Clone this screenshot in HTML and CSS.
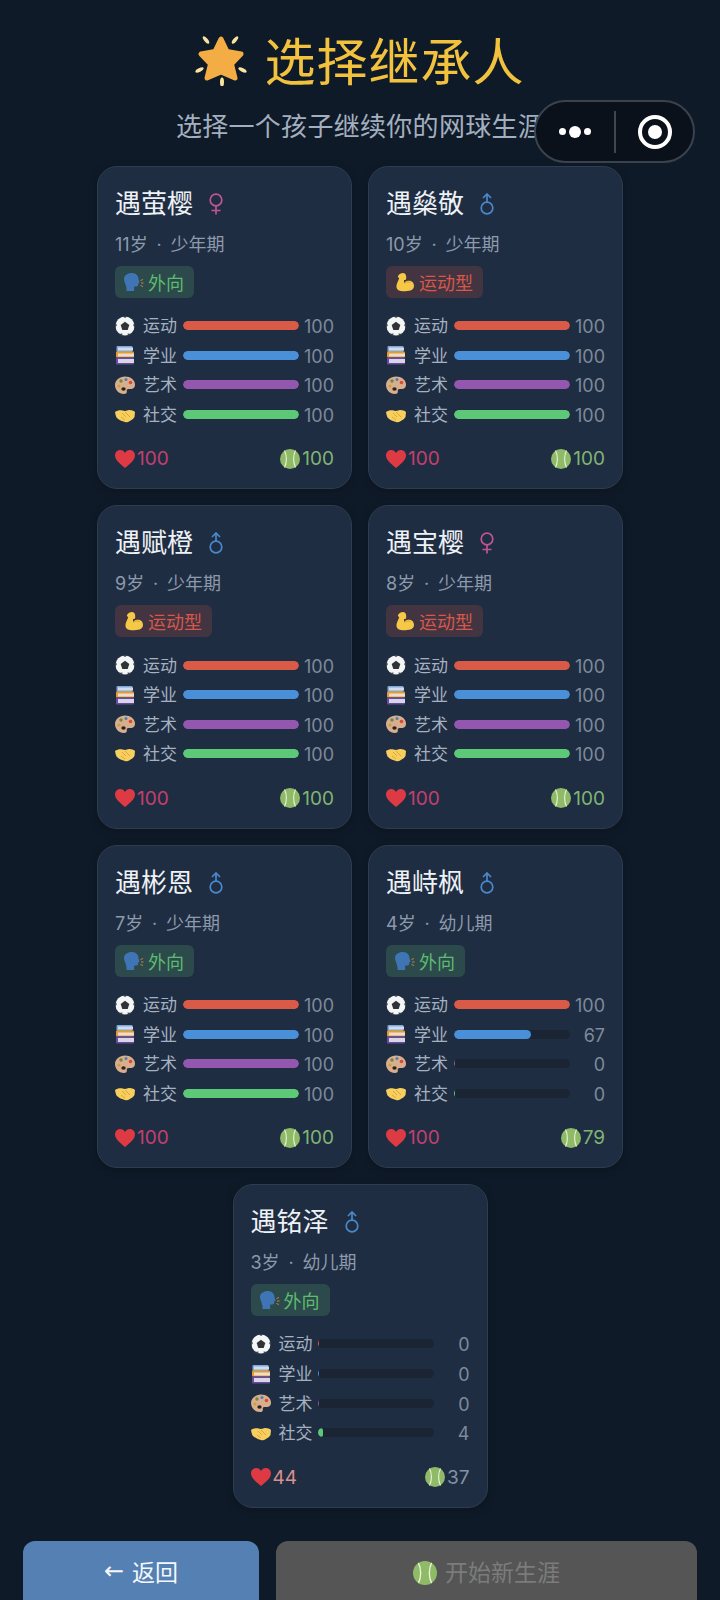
FILE: index.html
```html
<!DOCTYPE html>
<html lang="zh-CN">
<head>
    <meta charset="UTF-8">
    <meta name="viewport" content="width=device-width, initial-scale=1.0">
    <title>选择继承人</title>
    <link rel="stylesheet" href="styles.css">
</head>
<body>
    <svg class="defs">
        <symbol id="i-star" viewBox="0 0 52 52">
            <path d="M26 5l6 12.500 14 2.500-9.500 10 3.500 14-14-6-14 6 3.500-14L6 20l14-2.500z" fill="#f4ac45" stroke="#f4ac45" stroke-width="5" stroke-linejoin="round"/>
            <g fill="#fbe3a0">
                <ellipse cx="27" cy="48" rx="2" ry="4.500"/>
                <ellipse cx="11" cy="6" rx="1.800" ry="4.500" transform="rotate(-40 11 6)"/>
                <ellipse cx="40" cy="6" rx="1.800" ry="4.500" transform="rotate(40 40 6)"/>
                <ellipse cx="4.500" cy="36" rx="1.800" ry="4.500" transform="rotate(65 4.500 36)"/>
                <ellipse cx="47.500" cy="36" rx="1.800" ry="4.500" transform="rotate(-65 47.500 36)"/>
            </g>
        </symbol>
        <symbol id="i-girl" viewBox="0 0 16 22">
            <g stroke="currentColor" stroke-width="1.700" fill="none">
                <circle cx="8" cy="7" r="5.800"/>
                <path d="M8 12.800V21.500M3.500 17.500h9"/>
            </g>
        </symbol>
        <symbol id="i-boy" viewBox="0 0 16 22">
            <g stroke="currentColor" stroke-width="1.700" fill="none">
                <circle cx="8" cy="15" r="5.800"/>
                <path d="M8 9.200V1M4 5l4-4 4 4"/>
            </g>
        </symbol>
        <symbol id="i-head" viewBox="0 0 20 20">
            <path d="M8 1c4 0 6.500 3 6.500 6 0 1 .5 1.800 1 3 .3.800-.5 1-1.200 1.200 0 2-.3 3.300-2 3.300l-2 0c-.5 2 0 3.500 0 4.500H2.500c.3-3-.3-4.500-1-6.500C.7 10 0 8.500 0 7c0-3.500 3.500-6 8-6z" fill="#3f75b5"/>
            <path d="M16.500 8.500l2.500-1M17 11h2.500M16.500 13.500l2.500 1" stroke="#c9803f" stroke-width="1" fill="none"/>
        </symbol>
        <symbol id="i-muscle" viewBox="0 0 20 20">
            <path d="M8 1c-2 0-4 1-5 3-.4 1 .5 1.500 1.200 2.300-1 3-3.200 6-2.700 9 .5 3 3.500 4 7 4 5 0 10.500-.5 10.500-5.500 0-3.500-3-5.500-6-5-2 .3-3 1.200-4 2.300L9 8c1 .3 2 0 2.200-1.500C11.500 4 10.800 1 8 1z" fill="#f5c947"/>
            <path d="M9.500 11.500c1.500-1.500 4-2 6-1" stroke="#e0a030" stroke-width="1" fill="none"/>
        </symbol>
        <symbol id="i-ball" viewBox="0 0 20 20">
            <circle cx="10" cy="10" r="9.500" fill="#f4f5f5"/>
            <path d="M10 5.800l4.300 3.200-1.600 4.900H7.300L5.700 9z" fill="#2f3338"/>
            <path d="M7 0h6l-3 2zM20 7v5l-2-3zM0 7v5l2-3zM3.500 18l3.500 2 .5-2.500zM16.500 18L13 20l-.5-2.500z" fill="#3a4450"/>
        </symbol>
        <symbol id="i-books" viewBox="0 0 20 20">
            <rect x="1.500" y="1" width="16" height="6" rx="1" fill="#7fa8d8"/>
            <rect x="3" y="2.500" width="15" height="3" fill="#cfdcee"/>
            <rect x="1" y="6.500" width="18" height="6" rx="1" fill="#e89a30"/>
            <rect x="3" y="8.500" width="16" height="3" fill="#eadfcf"/>
            <rect x="1" y="12.500" width="18" height="7" rx="1" fill="#6a4aa0"/>
            <rect x="3" y="14" width="16" height="4" fill="#d8d6e6"/>
        </symbol>
        <symbol id="i-palette" viewBox="0 0 20 20">
            <path d="M10 1.500c5.500 0 10 3.500 10 8 0 4-3 5-5.500 4.500-2-.3-3 .5-2.700 2 .3 1.700-.5 3-3 3C4 19 0 15 0 10 0 5.500 4.500 1.500 10 1.500z" fill="#d9ae8c"/>
            <circle cx="6" cy="6" r="1.700" fill="#6b8a4a"/>
            <circle cx="11" cy="4.500" r="1.500" fill="#4a80b8"/>
            <circle cx="15.500" cy="7.500" r="1.800" fill="#d84a3a"/>
            <circle cx="4" cy="11" r="1.600" fill="#c8a040"/>
            <ellipse cx="8.500" cy="14" rx="2.200" ry="1.800" fill="#2b2224"/>
        </symbol>
        <symbol id="i-hands" viewBox="0 0 20 20">
            <path d="M0 7c2-1.500 5-2 7.500-1.500L10 6l3-.8c2.500-.5 5 .2 7 1.800l-.5 5c-1 2-3 3-5 4.300-1.500 1-3 1.200-4.500.7-3-.8-6-2-8.500-4.500C.8 11 .3 9 0 7z" fill="#f7cf5e"/>
            <path d="M7 8l4 4M10 7l5 5M6 12l4 3" stroke="#dc9a28" stroke-width=".8" fill="none"/>
        </symbol>
        <symbol id="i-heart" viewBox="0 0 20 20">
            <path d="M10 19C6 15.500 0 11.500 0 6.500 0 3.200 2.500 1 5.200 1 7.200 1 9 2 10 4c1-2 2.800-3 4.800-3C17.500 1 20 3.200 20 6.500c0 5-6 9-10 12.500z" fill="#dd3a44"/>
        </symbol>
        <symbol id="i-tennis" viewBox="0 0 20 20">
            <circle cx="10" cy="10" r="10" fill="#8fbb68"/>
            <path d="M4.500 1.600C7 6.500 7 13.500 4.500 18.400M15.500 1.600C13 6.500 13 13.500 15.500 18.400" stroke="#eef2d8" stroke-width="1.100" fill="none"/>
        </symbol>
    </svg>

    <div class="capsule">
        <div class="capsule-dots"><i></i><i class="big"></i><i></i></div>
        <div class="capsule-line"></div>
        <div class="capsule-target"><i></i></div>
    </div>

    <div class="title">
        <svg class="title-icon"><use href="#i-star"/></svg>
        <h1>选择继承人</h1>
    </div>
    <p class="subtitle">选择一个孩子继续你的网球生涯</p>

    <div class="cards">
        <div class="card">
            <div class="name">遇萤樱<svg class="gender girl"><use href="#i-girl"/></svg></div>
            <div class="age">11岁 · 少年期</div>
            <div class="tag tag-talk"><svg class="emoji"><use href="#i-head"/></svg>外向</div>
            <div class="stats">
                <div class="stat"><svg class="emoji"><use href="#i-ball"/></svg><span class="label">运动</span><div class="track"><div class="fill red" style="width:100%"></div></div><span class="val">100</span></div>
                <div class="stat"><svg class="emoji"><use href="#i-books"/></svg><span class="label">学业</span><div class="track"><div class="fill blue" style="width:100%"></div></div><span class="val">100</span></div>
                <div class="stat"><svg class="emoji"><use href="#i-palette"/></svg><span class="label">艺术</span><div class="track"><div class="fill purple" style="width:100%"></div></div><span class="val">100</span></div>
                <div class="stat"><svg class="emoji"><use href="#i-hands"/></svg><span class="label">社交</span><div class="track"><div class="fill green" style="width:100%"></div></div><span class="val">100</span></div>
            </div>
            <div class="foot">
                <div class="foot-item hp-full"><svg class="emoji"><use href="#i-heart"/></svg>100</div>
                <div class="foot-item en-full"><svg class="emoji"><use href="#i-tennis"/></svg>100</div>
            </div>
        </div>

        <div class="card">
            <div class="name">遇燊敬<svg class="gender boy"><use href="#i-boy"/></svg></div>
            <div class="age">10岁 · 少年期</div>
            <div class="tag tag-sport"><svg class="emoji"><use href="#i-muscle"/></svg>运动型</div>
            <div class="stats">
                <div class="stat"><svg class="emoji"><use href="#i-ball"/></svg><span class="label">运动</span><div class="track"><div class="fill red" style="width:100%"></div></div><span class="val">100</span></div>
                <div class="stat"><svg class="emoji"><use href="#i-books"/></svg><span class="label">学业</span><div class="track"><div class="fill blue" style="width:100%"></div></div><span class="val">100</span></div>
                <div class="stat"><svg class="emoji"><use href="#i-palette"/></svg><span class="label">艺术</span><div class="track"><div class="fill purple" style="width:100%"></div></div><span class="val">100</span></div>
                <div class="stat"><svg class="emoji"><use href="#i-hands"/></svg><span class="label">社交</span><div class="track"><div class="fill green" style="width:100%"></div></div><span class="val">100</span></div>
            </div>
            <div class="foot">
                <div class="foot-item hp-full"><svg class="emoji"><use href="#i-heart"/></svg>100</div>
                <div class="foot-item en-full"><svg class="emoji"><use href="#i-tennis"/></svg>100</div>
            </div>
        </div>

        <div class="card">
            <div class="name">遇赋橙<svg class="gender boy"><use href="#i-boy"/></svg></div>
            <div class="age">9岁 · 少年期</div>
            <div class="tag tag-sport"><svg class="emoji"><use href="#i-muscle"/></svg>运动型</div>
            <div class="stats">
                <div class="stat"><svg class="emoji"><use href="#i-ball"/></svg><span class="label">运动</span><div class="track"><div class="fill red" style="width:100%"></div></div><span class="val">100</span></div>
                <div class="stat"><svg class="emoji"><use href="#i-books"/></svg><span class="label">学业</span><div class="track"><div class="fill blue" style="width:100%"></div></div><span class="val">100</span></div>
                <div class="stat"><svg class="emoji"><use href="#i-palette"/></svg><span class="label">艺术</span><div class="track"><div class="fill purple" style="width:100%"></div></div><span class="val">100</span></div>
                <div class="stat"><svg class="emoji"><use href="#i-hands"/></svg><span class="label">社交</span><div class="track"><div class="fill green" style="width:100%"></div></div><span class="val">100</span></div>
            </div>
            <div class="foot">
                <div class="foot-item hp-full"><svg class="emoji"><use href="#i-heart"/></svg>100</div>
                <div class="foot-item en-full"><svg class="emoji"><use href="#i-tennis"/></svg>100</div>
            </div>
        </div>

        <div class="card">
            <div class="name">遇宝樱<svg class="gender girl"><use href="#i-girl"/></svg></div>
            <div class="age">8岁 · 少年期</div>
            <div class="tag tag-sport"><svg class="emoji"><use href="#i-muscle"/></svg>运动型</div>
            <div class="stats">
                <div class="stat"><svg class="emoji"><use href="#i-ball"/></svg><span class="label">运动</span><div class="track"><div class="fill red" style="width:100%"></div></div><span class="val">100</span></div>
                <div class="stat"><svg class="emoji"><use href="#i-books"/></svg><span class="label">学业</span><div class="track"><div class="fill blue" style="width:100%"></div></div><span class="val">100</span></div>
                <div class="stat"><svg class="emoji"><use href="#i-palette"/></svg><span class="label">艺术</span><div class="track"><div class="fill purple" style="width:100%"></div></div><span class="val">100</span></div>
                <div class="stat"><svg class="emoji"><use href="#i-hands"/></svg><span class="label">社交</span><div class="track"><div class="fill green" style="width:100%"></div></div><span class="val">100</span></div>
            </div>
            <div class="foot">
                <div class="foot-item hp-full"><svg class="emoji"><use href="#i-heart"/></svg>100</div>
                <div class="foot-item en-full"><svg class="emoji"><use href="#i-tennis"/></svg>100</div>
            </div>
        </div>

        <div class="card">
            <div class="name">遇彬恩<svg class="gender boy"><use href="#i-boy"/></svg></div>
            <div class="age">7岁 · 少年期</div>
            <div class="tag tag-talk"><svg class="emoji"><use href="#i-head"/></svg>外向</div>
            <div class="stats">
                <div class="stat"><svg class="emoji"><use href="#i-ball"/></svg><span class="label">运动</span><div class="track"><div class="fill red" style="width:100%"></div></div><span class="val">100</span></div>
                <div class="stat"><svg class="emoji"><use href="#i-books"/></svg><span class="label">学业</span><div class="track"><div class="fill blue" style="width:100%"></div></div><span class="val">100</span></div>
                <div class="stat"><svg class="emoji"><use href="#i-palette"/></svg><span class="label">艺术</span><div class="track"><div class="fill purple" style="width:100%"></div></div><span class="val">100</span></div>
                <div class="stat"><svg class="emoji"><use href="#i-hands"/></svg><span class="label">社交</span><div class="track"><div class="fill green" style="width:100%"></div></div><span class="val">100</span></div>
            </div>
            <div class="foot">
                <div class="foot-item hp-full"><svg class="emoji"><use href="#i-heart"/></svg>100</div>
                <div class="foot-item en-full"><svg class="emoji"><use href="#i-tennis"/></svg>100</div>
            </div>
        </div>

        <div class="card">
            <div class="name">遇峙枫<svg class="gender boy"><use href="#i-boy"/></svg></div>
            <div class="age">4岁 · 幼儿期</div>
            <div class="tag tag-talk"><svg class="emoji"><use href="#i-head"/></svg>外向</div>
            <div class="stats">
                <div class="stat"><svg class="emoji"><use href="#i-ball"/></svg><span class="label">运动</span><div class="track"><div class="fill red" style="width:100%"></div></div><span class="val">100</span></div>
                <div class="stat"><svg class="emoji"><use href="#i-books"/></svg><span class="label">学业</span><div class="track"><div class="fill blue" style="width:67%"></div></div><span class="val">67</span></div>
                <div class="stat"><svg class="emoji"><use href="#i-palette"/></svg><span class="label">艺术</span><div class="track"><div class="fill purple" style="width:0"></div></div><span class="val">0</span></div>
                <div class="stat"><svg class="emoji"><use href="#i-hands"/></svg><span class="label">社交</span><div class="track"><div class="fill green" style="width:0"></div></div><span class="val">0</span></div>
            </div>
            <div class="foot">
                <div class="foot-item hp-full"><svg class="emoji"><use href="#i-heart"/></svg>100</div>
                <div class="foot-item en-full"><svg class="emoji"><use href="#i-tennis"/></svg>79</div>
            </div>
        </div>

        <div class="card">
            <div class="name">遇铭泽<svg class="gender boy"><use href="#i-boy"/></svg></div>
            <div class="age">3岁 · 幼儿期</div>
            <div class="tag tag-talk"><svg class="emoji"><use href="#i-head"/></svg>外向</div>
            <div class="stats">
                <div class="stat"><svg class="emoji"><use href="#i-ball"/></svg><span class="label">运动</span><div class="track"><div class="fill red" style="width:0"></div></div><span class="val">0</span></div>
                <div class="stat"><svg class="emoji"><use href="#i-books"/></svg><span class="label">学业</span><div class="track"><div class="fill blue" style="width:0"></div></div><span class="val">0</span></div>
                <div class="stat"><svg class="emoji"><use href="#i-palette"/></svg><span class="label">艺术</span><div class="track"><div class="fill purple" style="width:0"></div></div><span class="val">0</span></div>
                <div class="stat"><svg class="emoji"><use href="#i-hands"/></svg><span class="label">社交</span><div class="track"><div class="fill green" style="width:4%"></div></div><span class="val">4</span></div>
            </div>
            <div class="foot">
                <div class="foot-item hp-low"><svg class="emoji"><use href="#i-heart"/></svg>44</div>
                <div class="foot-item en-low"><svg class="emoji"><use href="#i-tennis"/></svg>37</div>
            </div>
        </div>
    </div>

    <div class="buttons">
        <button class="btn btn-back"><span class="arrow">←</span>返回</button>
        <button class="btn btn-start"><svg class="btn-icon"><use href="#i-tennis"/></svg>开始新生涯</button>
    </div>
</body>
</html>
```

FILE: styles.css
```css
body {
    font-family: Inter, "Noto Sans CJK SC", sans-serif;
    margin: 0;
    padding: 0;
    width: 720px;
    height: 1600px;
    overflow: hidden;
    position: relative;
    background: #0f1a28;
    color: #e8edf3;
}

.defs {
    display: none;
}

.capsule {
    position: absolute;
    left: 534px;
    top: 100px;
    width: 161px;
    height: 63px;
    box-sizing: border-box;
    display: flex;
    align-items: center;
    background: #0b111b;
    border: 2px solid #3a424e;
    border-radius: 32px;
}

.capsule-dots {
    width: 78px;
    display: flex;
    justify-content: center;
    align-items: center;
    gap: 3px;
}

.capsule-dots i {
    width: 7px;
    height: 7px;
    border-radius: 50%;
    background: #fff;
}

.capsule-dots i.big {
    width: 12px;
    height: 12px;
}

.capsule-line {
    width: 2px;
    height: 42px;
    background: #3f4650;
}

.capsule-target {
    flex: 1;
    display: flex;
    justify-content: center;
}

.capsule-target i {
    width: 34px;
    height: 34px;
    box-sizing: border-box;
    border: 4px solid #fff;
    border-radius: 50%;
    position: relative;
    display: block;
}

.capsule-target i::after {
    content: "";
    position: absolute;
    left: 6px;
    top: 6px;
    width: 14px;
    height: 14px;
    border-radius: 50%;
    background: #fff;
}

.title {
    display: flex;
    justify-content: center;
    align-items: center;
    gap: 17px;
    height: 60px;
    padding-top: 33px;
}

.title-icon {
    width: 52px;
    height: 52px;
    margin-bottom: 6px;
}

.title h1 {
    margin: 0;
    font-size: 51px;
    font-weight: 400;
    line-height: 60px;
    letter-spacing: 1px;
    color: #f2c23e;
}

.subtitle {
    margin: 15px 0 0;
    height: 38px;
    line-height: 38px;
    text-align: center;
    font-size: 26px;
    letter-spacing: 0.3px;
    color: #a3afbe;
}

.cards {
    width: 526px;
    margin: 20px auto 0;
    display: flex;
    flex-wrap: wrap;
    justify-content: center;
    gap: 16px;
}

.card {
    width: 255px;
    height: 323.4px;
    box-sizing: border-box;
    padding: 17px 17px 0;
    display: flex;
    flex-direction: column;
    background: #1f2d42;
    border: 1px solid #2e3c52;
    border-radius: 20px;
    box-shadow: 0 2px 10px rgba(0, 0, 0, 0.2);
}

.name {
    display: flex;
    align-items: center;
    height: 38px;
    padding-top: 1px;
    font-size: 26px;
    line-height: 38px;
    color: #eef2f6;
}

.gender {
    margin-left: 15px;
    width: 16px;
    height: 22px;
}

.girl {
    color: #c0568e;
}

.boy {
    color: #4a88cc;
}

.age {
    margin-top: 9px;
    height: 26px;
    line-height: 26px;
    font-size: 18px;
    word-spacing: 3.800px;
    color: #8d9aac;
}

.tag {
    align-self: flex-start;
    margin-top: 8px;
    height: 32px;
    padding: 0 10px 0 9px;
    display: flex;
    align-items: center;
    gap: 4px;
    border-radius: 6px;
    font-size: 18px;
}

.tag-talk {
    background: #2c4a4c;
    color: #5cbc70;
}

.tag-sport {
    background: #423541;
    color: #d8574a;
}

.emoji {
    width: 20px;
    height: 20px;
    flex-shrink: 0;
}

.stats {
    margin-top: 13px;
    display: flex;
    flex-direction: column;
}

.stat {
    display: flex;
    align-items: center;
    height: 29.6px;
}

.label {
    margin-left: 8px;
    padding-bottom: 2px;
    width: 39.500px;
    font-size: 17px;
    color: #a5b1c1;
    white-space: nowrap;
}

.track {
    width: 116px;
    height: 9px;
    border-radius: 5px;
    background: #1a2433;
    overflow: hidden;
}

.fill {
    height: 100%;
    min-width: 1px;
    border-radius: 5px;
}

.red {
    background: #d95b47;
}

.blue {
    background: #4a90d9;
}

.purple {
    background: #9457b0;
}

.green {
    background: #5cc878;
}

.val {
    flex: 1;
    padding-top: 2px;
    text-align: right;
    font-size: 18px;
    color: #7d8a9c;
}

.foot {
    margin-top: 18px;
    display: flex;
    justify-content: space-between;
    align-items: center;
    font-size: 19px;
}

.foot-item {
    display: flex;
    align-items: center;
    gap: 2px;
}

.hp-full {
    color: #c2406f;
}

.hp-low {
    color: #d9908e;
}

.en-full {
    color: #7fb573;
}

.en-low {
    color: #8592a3;
}

.buttons {
    position: absolute;
    left: 23px;
    right: 23px;
    top: 1541px;
    display: flex;
    gap: 17px;
}

.btn {
    height: 70px;
    border: none;
    border-radius: 12px;
    font-family: inherit;
    font-size: 23px;
    display: flex;
    justify-content: center;
    align-items: center;
    gap: 8px;
    padding: 0 0 10px;
}

.btn-back {
    width: 236px;
    background: #5580b3;
    color: #f4f7fb;
}

.arrow {
    font-family: "DejaVu Sans", sans-serif;
    font-size: 24px;
}

.btn-start {
    flex: 1;
    background: #555555;
    color: #7c7c7c;
}

.btn-icon {
    width: 24px;
    height: 24px;
    margin-top: 3px;
}
```
